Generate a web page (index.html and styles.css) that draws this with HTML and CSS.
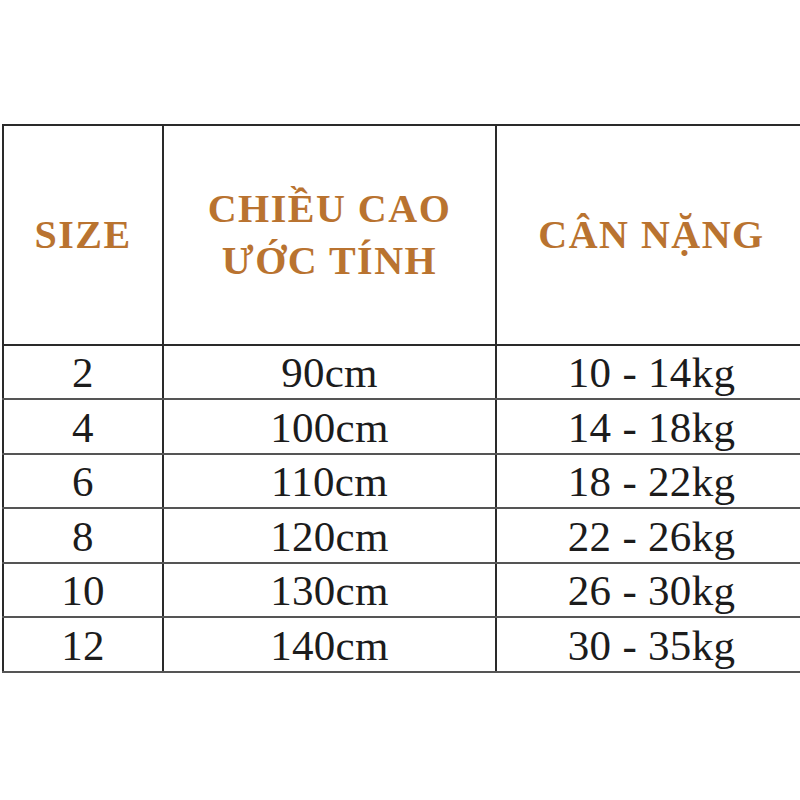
FILE: index.html
```html
<!DOCTYPE html>
<html lang="vi">
<head>
<meta charset="utf-8">
<title>Bảng size</title>
<link rel="stylesheet" href="styles.css">
</head>
<body>
<div class="wrap">
  <table class="size-table">
    <colgroup>
      <col class="c1"><col class="c2"><col class="c3">
    </colgroup>
    <thead>
      <tr class="head">
        <th>SIZE</th>
        <th>CHIỀU CAO<br>ƯỚC TÍNH</th>
        <th>CÂN NẶNG</th>
      </tr>
    </thead>
    <tbody>
      <tr class="row-a"><td>2</td><td>90cm</td><td>10 - 14kg</td></tr>
      <tr class="row-b"><td>4</td><td>100cm</td><td>14 - 18kg</td></tr>
      <tr class="row-a"><td>6</td><td>110cm</td><td>18 - 22kg</td></tr>
      <tr class="row-b"><td>8</td><td>120cm</td><td>22 - 26kg</td></tr>
      <tr class="row-a"><td>10</td><td>130cm</td><td>26 - 30kg</td></tr>
      <tr class="row-b"><td>12</td><td>140cm</td><td>30 - 35kg</td></tr>
    </tbody>
  </table>
</div>
</body>
</html>
```

FILE: styles.css
```css
html, body {
  margin: 0;
  padding: 0;
  background: #ffffff;
  overflow: hidden;
}
.wrap {
  padding-top: 124px;
  padding-left: 2px;
  width: 820px;
}
.size-table {
  border-collapse: collapse;
  table-layout: fixed;
  width: 804px;
  font-family: "Liberation Serif", "DejaVu Serif", serif;
}
.c1 { width: 160px; }
.c2 { width: 333px; }
.c3 { width: 311px; }
.size-table th,
.size-table td {
  border: 2px solid #2a2a2a;
  padding: 0;
  text-align: center;
  vertical-align: middle;
}
.size-table tbody td {
  border-top-color: #555555;
  border-bottom-color: #555555;
}
.head {
  height: 220px;
}
.head th {
  color: #b97330;
  font-weight: bold;
  font-size: 40px;
  line-height: 52px;
  letter-spacing: 1.5px;
}
.row-a { height: 54px; }
.row-b { height: 55px; }
.size-table td {
  color: #1c1c1c;
  font-size: 43px;
  line-height: 50px;
  padding-top: 2px;
  letter-spacing: 0.3px;
}
```
